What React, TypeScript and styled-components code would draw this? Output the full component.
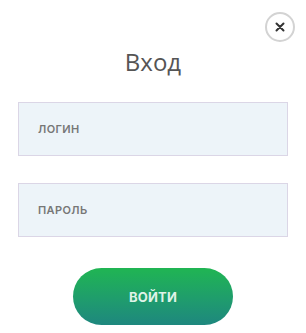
import React from "react";
import styled, { createGlobalStyle } from "styled-components";

const Global = createGlobalStyle`
  html, body { margin: 0; padding: 0; background: #ffffff; }
  body { font-family: "Open Sans", "Liberation Sans", sans-serif; }
  * { box-sizing: border-box; }
`;

const Modal = styled.div`
  position: relative;
  width: 306px;
  height: 333px;
  padding: 47px 18px 0;
  display: flex;
  flex-direction: column;
  align-items: stretch;
  background: #fff;
`;

const Close = styled.button`
  position: absolute;
  top: 12px;
  left: 265px;
  width: 30px;
  height: 30px;
  border-radius: 50%;
  border: 2px solid #d3d3d3;
  background: #fff;
  padding: 0;
  display: flex;
  align-items: center;
  justify-content: center;
  cursor: pointer;
`;

const Title = styled.h2`
  margin: 0 0 25px;
  font-family: "Open Sans", sans-serif;
  font-weight: 400;
  font-size: 24px;
  line-height: 30px;
  color: #555555;
  text-align: center;
`;

const Field = styled.div<{ $gap: number }>`
  height: 54px;
  margin-bottom: ${(p) => p.$gap}px;
  background: #edf4f9;
  border: 1px solid #dbd6e6;
  display: flex;
  align-items: center;
  padding-left: 19px;
`;

const Label = styled.span`
  font-family: Inter, "Open Sans", sans-serif;
  font-weight: 600;
  font-size: 11px;
  letter-spacing: 0.4px;
  color: #777777;
`;

const Submit = styled.button`
  align-self: center;
  width: 160px;
  height: 57px;
  border: none;
  border-radius: 29px;
  background: linear-gradient(180deg, #20b553 0%, #1f9a6f 60%, #1e877e 100%);
  color: #dff3e8;
  font-family: Inter, "Open Sans", sans-serif;
  font-weight: 700;
  font-size: 13px;
  letter-spacing: 0.2px;
  cursor: pointer;
`;

export default function App() {
  return (
    <>
      <Global />
      <Modal>
        <Close aria-label="close">
          <svg width="10" height="10" viewBox="0 0 10 10">
            <path d="M1.5 1.5 L8.5 8.5 M8.5 1.5 L1.5 8.5" stroke="#333" strokeWidth="2" strokeLinecap="round" />
          </svg>
        </Close>
        <Title>Вход</Title>
        <Field $gap={27}>
          <Label>ЛОГИН</Label>
        </Field>
        <Field $gap={31}>
          <Label>ПАРОЛЬ</Label>
        </Field>
        <Submit>ВОЙТИ</Submit>
      </Modal>
    </>
  );
}
